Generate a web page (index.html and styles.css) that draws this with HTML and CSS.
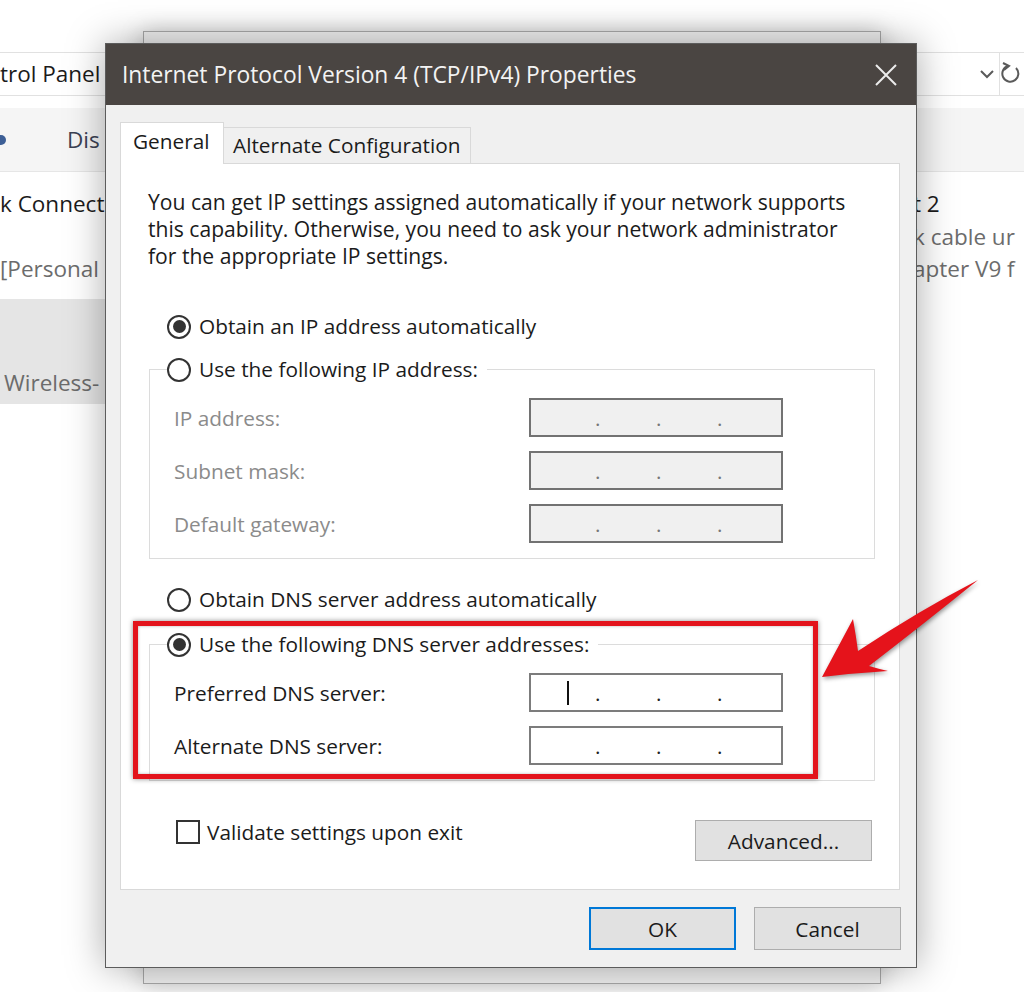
FILE: index.html
```html
<!DOCTYPE html>
<html lang="en">
<head>
<meta charset="utf-8">
<title>Internet Protocol Version 4 (TCP/IPv4) Properties</title>
<link rel="stylesheet" href="styles.css">
</head>
<body>
<div class="explorer">
  <div class="addr">
    <div class="addr-path">trol Panel</div>
    <div class="addr-drop">
      <svg width="16" height="10" viewBox="0 0 16 10"><path d="M2 2 L8 8 L14 2" fill="none" stroke="#5a5a5a" stroke-width="2"/></svg>
    </div>
    <div class="addr-refresh">
      <svg width="24" height="26" viewBox="0 0 24 26"><path d="M8 5 A8 8 0 1 0 16 7" fill="none" stroke="#5a5a5a" stroke-width="2"/><path d="M3 2 L9 5 L4 9" fill="none" stroke="#5a5a5a" stroke-width="2"/></svg>
    </div>
  </div>
  <div class="ribbon">
    <span class="ribbon-icon"></span>
    <span class="ribbon-item">Dis</span>
  </div>
  <div class="items">
    <div class="col-left">
      <div class="item">
        <div class="item-name">k Connect</div>
        <div class="item-sub">&nbsp;</div>
        <div class="item-sub">[Personal</div>
      </div>
      <div class="item item-selected">
        <div class="item-name">&nbsp;</div>
        <div class="item-sub">&nbsp;</div>
        <div class="item-sub">Wireless-</div>
      </div>
    </div>
    <div class="col-gap"></div>
    <div class="col-right">
      <div class="item-name">t 2</div>
      <div class="item-sub">k cable ur</div>
      <div class="item-sub">apter V9 f</div>
    </div>
  </div>
</div>

<div class="backwindow"></div>

<div class="dialog">
  <div class="titlebar">
    <span class="title">Internet Protocol Version 4 (TCP/IPv4) Properties</span>
    <svg class="close" width="22" height="22" viewBox="0 0 22 22"><path d="M1 1 L21 21 M21 1 L1 21" stroke="#ececec" stroke-width="2"/></svg>
  </div>
  <div class="dlg-body">
    <div class="tabs">
      <div class="tab tab-active">General</div>
      <div class="tab tab-inactive">Alternate Configuration</div>
    </div>
    <div class="panel">
      <p class="intro">You can get IP settings assigned automatically if your network supports<br>this capability. Otherwise, you need to ask your network administrator<br>for the appropriate IP settings.</p>

      <div class="opt opt-first"><span class="radio checked"></span><span>Obtain an IP address automatically</span></div>

      <fieldset class="group group-ip">
        <legend><span class="opt"><span class="radio"></span><span>Use the following IP address:</span></span></legend>
        <div class="field disabled"><span class="field-label">IP address:</span><span class="ipbox"><span class="dot">.</span><span class="dot">.</span><span class="dot">.</span></span></div>
        <div class="field disabled"><span class="field-label">Subnet mask:</span><span class="ipbox"><span class="dot">.</span><span class="dot">.</span><span class="dot">.</span></span></div>
        <div class="field disabled"><span class="field-label">Default gateway:</span><span class="ipbox"><span class="dot">.</span><span class="dot">.</span><span class="dot">.</span></span></div>
      </fieldset>

      <div class="opt opt-dns"><span class="radio"></span><span>Obtain DNS server address automatically</span></div>

      <fieldset class="group group-dns">
        <legend><span class="opt"><span class="radio checked"></span><span>Use the following DNS server addresses:</span></span></legend>
        <div class="field"><span class="field-label">Preferred DNS server:</span><span class="ipbox"><span class="caret"></span><span class="dot">.</span><span class="dot">.</span><span class="dot">.</span></span></div>
        <div class="field"><span class="field-label">Alternate DNS server:</span><span class="ipbox"><span class="dot">.</span><span class="dot">.</span><span class="dot">.</span></span></div>
      </fieldset>

      <div class="bottom-row">
        <div class="check"><span class="checkbox"></span><span>Validate settings upon exit</span></div>
        <div class="btn btn-adv">Advanced...</div>
      </div>
    </div>
    <div class="actions">
      <div class="btn btn-ok">OK</div>
      <div class="btn btn-cancel">Cancel</div>
    </div>
  </div>
</div>

<div class="highlight"></div>
<svg class="arrow" width="200" height="140" viewBox="0 0 200 140">
  <path d="M22 117 L53 59 Q56 76 58 91 Q120 50 178 20 Q126 62 69 106 Q79 109 88 111 Q55 113 22 117 Z" fill="#e5131b"/>
</svg>
</body>
</html>
```
FILE: styles.css
```css
* { box-sizing: border-box; }
html, body { margin: 0; padding: 0; }
body {
  width: 1024px;
  height: 992px;
  overflow: hidden;
  position: relative;
  background: #ffffff;
  font-family: "Open Sans", "Noto Sans", sans-serif;
  color: #1b1b1b;
}

/* ---------- background explorer window ---------- */
.explorer { padding-top: 52px; font-size: 22.5px; }
.addr {
  display: flex;
  height: 44px;
  border-top: 1px solid #e1e1e1;
  border-bottom: 1px solid #e1e1e1;
}
.addr-path { flex: 1; line-height: 42px; color: #1b1b1b; white-space: nowrap; overflow: hidden; }
.addr-drop {
  width: 26px;
  border-right: 1px solid #e1e1e1;
  display: flex; align-items: center; justify-content: center;
}
.addr-refresh { width: 24px; display: flex; align-items: center; justify-content: flex-end; }

.ribbon {
  margin-top: 12px;
  height: 64px;
  background: #f5f5f5;
  border-bottom: 1px solid #e6e6e6;
  display: flex;
  align-items: center;
  white-space: nowrap;
}
.ribbon-icon {
  width: 10px; height: 10px; border-radius: 50%;
  background: #3d5f96;
  margin-left: -4px;
  margin-right: 61px;
}
.ribbon-item { color: #3b4254; }

.items { display: grid; grid-template-columns: 106px 1fr 111px; }
.col-left { padding-top: 16px; overflow: hidden; }
.item { line-height: 32.5px; white-space: nowrap; }
.item-selected {
  margin-top: 13.5px;
  padding: 2.5px 0 5px 4px;
  background: #e5e5e5;
}
.item-name { color: #1b1b1b; }
.item-sub { color: #6c6c6c; }
.col-right { padding-top: 16px; line-height: 32.5px; white-space: nowrap; overflow: hidden; }

/* ---------- window behind the dialog ---------- */
.backwindow {
  position: absolute;
  left: 143px; top: 31px;
  width: 738px; height: 953px;
  background: #f0f0f0;
  border: 1px solid #a8a8a8;
  box-shadow: 0 0 22px rgba(0, 0, 0, 0.22);
}

/* ---------- dialog ---------- */
.dialog {
  position: absolute;
  left: 105px; top: 43px;
  width: 812px; height: 925px;
  background: #f0f0f0;
  border: 1px solid #5c5c5c;
  box-shadow: 0 0 36px rgba(0, 0, 0, 0.34);
  display: flex;
  flex-direction: column;
  font-size: 20.8px;
}
.titlebar {
  height: 61px;
  background: #4a4542;
  display: flex;
  align-items: center;
  justify-content: space-between;
  padding: 0 19px 0 16px;
}
.title { color: #f3f3f3; font-size: 22.8px; white-space: nowrap; }

.dlg-body { padding: 17px 16px 0 14px; }

.tabs { display: flex; align-items: flex-end; height: 41px; }
.tab { border: 1px solid #d9d9d9; border-bottom: none; white-space: nowrap; color: #1b1b1b; }
.tab-active {
  position: relative;
  z-index: 1;
  width: 104px;
  height: 42px;
  margin-bottom: -1px;
  padding-left: 12px;
  line-height: 37px;
  background: #ffffff;
}
.tab-inactive {
  width: 247px;
  height: 36px;
  padding-left: 9px;
  line-height: 34px;
  border-left: none;
  background: #f0f0f0;
}

.panel {
  height: 727px;
  background: #ffffff;
  border: 1px solid #d9d9d9;
  padding: 24px 24px 0 28px;
}
.intro { margin: 0 0 0 -1px; line-height: 27px; white-space: nowrap; font-size: 21.1px; }

.opt { display: flex; align-items: center; line-height: 27px; white-space: nowrap; }
.opt-first { margin: 44px 0 0 18px; }
.opt-dns { margin: 27px 0 0 18px; }
.radio {
  width: 24px; height: 24px;
  border-radius: 50%;
  border: 2px solid #333333;
  background: #ffffff;
  margin-right: 8px;
  display: flex; align-items: center; justify-content: center;
  flex: none;
}
.radio.checked::after {
  content: "";
  width: 13px; height: 13px;
  border-radius: 50%;
  background: #333333;
}

.group {
  margin: 0;
  border: 1px solid #dcdcdc;
  padding: 15px 0 15px 24px;
  min-width: 0;
}
.group-ip { margin-top: 16px; }
.group-dns { margin-top: 18px; }
.group legend { padding: 0 9px 0 0; margin-left: -7px; }

.field { display: flex; align-items: center; height: 39px; }
.field + .field { margin-top: 14px; }
.field-label { width: 355px; white-space: nowrap; }
.disabled .field-label { color: #8b8b8b; }

.ipbox {
  position: relative;
  width: 254px; height: 39px;
  border: 2px solid #7c7c7c;
  background: #ffffff;
  display: flex;
  align-items: flex-end;
  padding: 0 0 3px 64px;
  gap: 57px;
}
.disabled .ipbox { background: #f0f0f0; border-color: #727272; }
.dot { width: 4px; text-align: center; line-height: 27px; color: #222222; }
.disabled .dot { color: #777777; }
.caret {
  position: absolute;
  left: 36px; top: 6px;
  width: 2px; height: 24px;
  background: #111111;
}

.bottom-row {
  margin-top: 39px;
  display: flex;
  justify-content: space-between;
  align-items: flex-start;
  padding: 0 3px 0 27px;
}
.check { display: flex; align-items: center; line-height: 24px; white-space: nowrap; }
.checkbox {
  width: 24px; height: 24px;
  border: 2px solid #333333;
  background: #ffffff;
  margin-right: 7px;
  flex: none;
}

.btn {
  display: flex; align-items: center; justify-content: center;
  background: #e1e1e1;
  border: 1px solid #adadad;
  color: #1b1b1b;
  white-space: nowrap;
}
.btn-adv { width: 177px; height: 41px; }

.actions {
  display: flex;
  justify-content: flex-end;
  gap: 18px;
  margin-top: 17px;
  margin-right: -1px;
}
.btn-ok { width: 147px; height: 43px; border: 2px solid #0078d7; }
.btn-cancel { width: 147px; height: 43px; }

/* ---------- annotation overlay ---------- */
.highlight {
  position: absolute;
  left: 133px; top: 621px;
  width: 685px; height: 158px;
  border: 5px solid #e3141c;
  box-shadow: 0 0 5px rgba(0, 0, 0, 0.45), inset 0 0 3px rgba(0, 0, 0, 0.3);
}
.arrow {
  position: absolute;
  left: 800px; top: 560px;
  filter: drop-shadow(1px 2px 2px rgba(0, 0, 0, 0.4));
}
```
